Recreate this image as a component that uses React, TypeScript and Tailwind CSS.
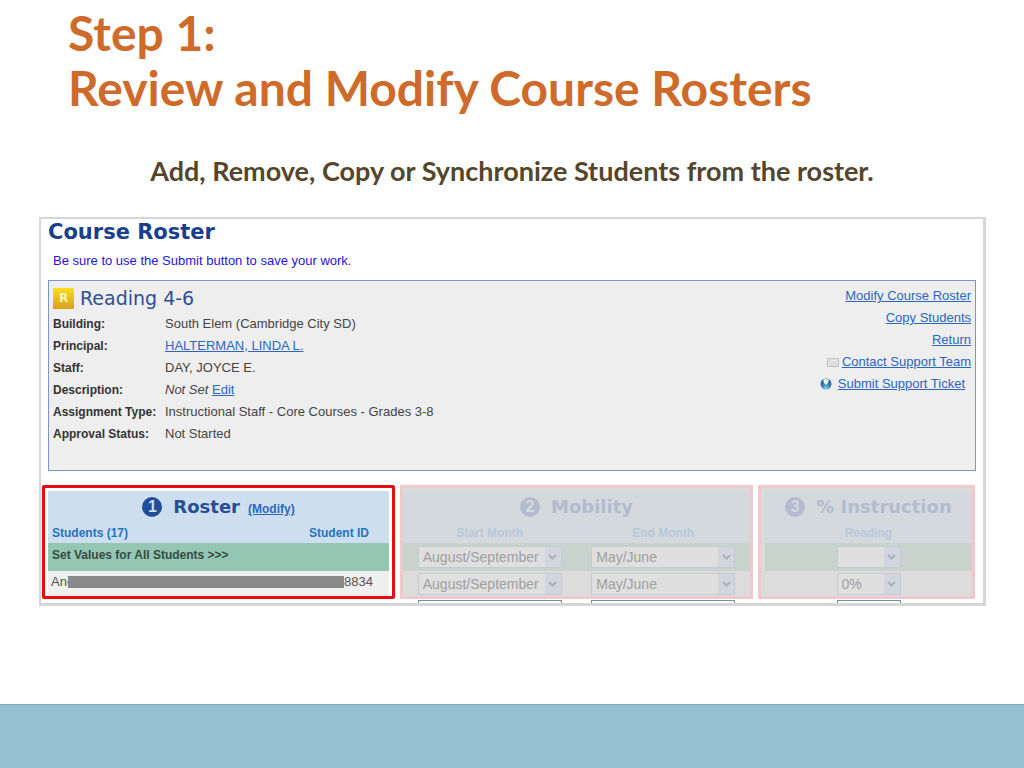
import type { ReactNode } from 'react';
import { clsx } from 'clsx';

const details: { label: string; value: ReactNode }[] = [
  { label: 'Building:', value: 'South Elem (Cambridge City SD)' },
  { label: 'Principal:', value: <TextLink>HALTERMAN, LINDA L.</TextLink> },
  { label: 'Staff:', value: 'DAY, JOYCE E.' },
  {
    label: 'Description:',
    value: (
      <>
        <em>Not Set</em> <TextLink>Edit</TextLink>
      </>
    ),
  },
  { label: 'Assignment Type:', value: 'Instructional Staff - Core Courses - Grades 3-8' },
  { label: 'Approval Status:', value: 'Not Started' },
];

function TextLink({ children }: { children: ReactNode }) {
  return (
    <a href="#" className="text-[#2b66c4] underline">
      {children}
    </a>
  );
}

function MailIcon() {
  return (
    <svg viewBox="0 0 12 9" className="h-[9px] w-3" aria-hidden="true">
      <rect x="0.5" y="0.5" width="11" height="8" fill="#dcdcdc" stroke="#c4c4c4" />
      <path d="M1.5 7.5 L4.5 3.5 L10.5 1.5" fill="none" stroke="#f4f4f4" />
    </svg>
  );
}

function HelpIcon() {
  return (
    <svg viewBox="0 0 12 12" className="h-3 w-3" aria-hidden="true">
      <defs>
        <radialGradient id="ball" cx="0.5" cy="0.9" r="0.9">
          <stop offset="0" stopColor="#8fd0ee" />
          <stop offset="0.45" stopColor="#2f7fb5" />
          <stop offset="1" stopColor="#2b5c8c" />
        </radialGradient>
      </defs>
      <circle cx="6" cy="6" r="5.5" fill="url(#ball)" />
      <path d="M3.5 1.5 Q6 0.5 8.5 1.5 Q9 4.5 6 7 Q3 4.5 3.5 1.5 Z" fill="#eef7fc" />
    </svg>
  );
}

function StepHeading({ step, title, muted, children }: { step: number; title: string; muted?: boolean; children?: ReactNode }) {
  return (
    <div className="flex h-8 items-center justify-center">
      <span
        className={clsx(
          'flex h-5 w-5 items-center justify-center rounded-full font-["Liberation_Sans"] text-base leading-5 font-bold',
          muted ? 'bg-[#b3bccf] text-[#d4d9dd]' : 'bg-[#214d9b] text-[#cddfef]',
        )}
      >
        {step}
      </span>
      <h3
        className={clsx(
          'ml-[11px] font-["DejaVu_Sans"] text-lg font-bold whitespace-nowrap',
          muted ? 'text-[#b3bccf]' : 'text-[#2a4c96]',
        )}
      >
        {title}
      </h3>
      {children}
    </div>
  );
}

function Picker({ label, options, wide }: { label: string; options: string[]; wide?: boolean }) {
  return (
    <span className={clsx('relative mx-auto block h-[22px]', wide ? 'w-36' : 'w-16')}>
      <select
        aria-label={label}
        className='block h-full w-full appearance-none border border-[#c6cbd1] bg-[#dfdfdf] pl-1 font-["Liberation_Sans"] text-sm leading-5 text-[#a0a0a0]'
      >
        {options.map((option) => (
          <option key={option}>{option}</option>
        ))}
      </select>
      <span className="pointer-events-none absolute top-px right-px flex h-5 w-4 items-center justify-center bg-[#d0d5df]">
        <svg viewBox="0 0 9 6" className="h-[6px] w-[9px]" aria-hidden="true">
          <path d="M1 1 L4.5 4.5 L8 1" fill="none" stroke="#a9b1be" strokeWidth="2" />
        </svg>
      </span>
    </span>
  );
}

interface StepTableProps {
  step: number;
  title: string;
  columns: string[];
  rows: string[][];
  wide?: boolean;
}

// Inactive steps are greyed out; the following row is cut off by the frame.
function MutedStep({ step, title, columns, rows, wide }: StepTableProps) {
  return (
    <section>
      <div className={clsx('h-[114px] border-[3px] border-[#eec8cd] bg-[#dadcda] pt-[3px]', !wide && 'pl-1')}>
        <table className="w-full table-fixed border-collapse text-center">
          <thead className="bg-[#d3d9dd]">
            <tr>
              <th colSpan={columns.length} className="p-0">
                <StepHeading step={step} title={title} muted />
              </th>
            </tr>
            <tr className="h-5 leading-5 text-[#b7c8dc]">
              {columns.map((column) => (
                <th key={column} className="p-0">
                  {column}
                </th>
              ))}
            </tr>
          </thead>
          <tbody>
            {rows.map((row, i) => (
              <tr key={i} className={i === 0 ? 'h-7 bg-[#c8d3ce]' : 'h-[25px] bg-[#dcdcdc]'}>
                {row.map((value, col) => (
                  <td key={col} className="p-0">
                    <Picker label={columns[col]} options={[value]} wide={wide} />
                  </td>
                ))}
              </tr>
            ))}
          </tbody>
        </table>
      </div>
      <div className={clsx('mx-[3px] flex h-1 overflow-hidden pt-px', !wide && 'pl-1')}>
        {columns.map((column) => (
          <div key={column} className="flex-1">
            <div className={clsx('mx-auto h-[22px] border border-[#7090a8] bg-white', wide ? 'w-36' : 'w-16')} />
          </div>
        ))}
      </div>
    </section>
  );
}

function RosterStep() {
  return (
    <section>
      <div className="h-[114px] rounded-[2px] border-[3px] border-[#e80c12] bg-white px-[3px] pt-[3px]">
        <table className="w-full border-collapse">
          <thead className="bg-[#cddfef]">
            <tr>
              <th colSpan={2} className="p-0">
                <StepHeading step={1} title="Roster">
                  <a href="#" className="mt-1 ml-2 text-[#2b66c4] underline">
                    (Modify)
                  </a>
                </StepHeading>
              </th>
            </tr>
            <tr className="h-5 leading-5 text-[#2673c0]">
              <th className="p-0 pl-1 text-left">Students (17)</th>
              <th className="p-0 pr-5 text-right">Student ID</th>
            </tr>
          </thead>
          <tbody>
            <tr className="h-7 bg-[#95c5b3] text-[#344c44]">
              <th colSpan={2} className="p-0 pb-1 pl-1 text-left">
                Set Values for All Students &gt;&gt;&gt;
              </th>
            </tr>
            <tr className="h-[25px] bg-[#efefef] text-[13px] text-[#555]">
              <td colSpan={2} className="p-0 pr-4 pb-1 pl-[3px]">
                <div className="flex items-center">
                  <span className="w-[17px]">And</span>
                  <span className="relative h-3 flex-1 bg-[#8a8a8a]" />
                  <span>8834</span>
                </div>
              </td>
            </tr>
          </tbody>
        </table>
      </div>
    </section>
  );
}

function CourseInfo() {
  return (
    <div className="mx-[7px] flex h-[191px] justify-between border border-[#7e94c6] bg-[#eee] pt-[3px] pr-1 pl-1">
      <div>
        <div className="flex h-7 items-center gap-[6px]">
          <span className='flex h-[21px] w-[21px] items-center justify-center bg-linear-to-b from-[#fbdc1c] to-[#d8a01c] font-["DejaVu_Sans"] text-xs font-bold text-[#fbf3b0]'>
            R
          </span>
          <h2 className='font-["DejaVu_Sans"] text-[19px] text-[#2e4f96]'>Reading 4-6</h2>
        </div>
        <dl className="mt-px grid grid-cols-[112px_auto] leading-[22px] text-[#444]">
          {details.map(({ label, value }) => (
            <div key={label} className="contents">
              <dt className="font-bold whitespace-nowrap text-[#333]">{label}</dt>
              <dd className="text-[13px]">{value}</dd>
            </div>
          ))}
        </dl>
      </div>
      <ul className="mt-px text-right text-[13px] leading-[22px]">
        <li>
          <TextLink>Modify Course Roster</TextLink>
        </li>
        <li>
          <TextLink>Copy Students</TextLink>
        </li>
        <li>
          <TextLink>Return</TextLink>
        </li>
        <li className="flex items-center justify-end gap-[3px]">
          <MailIcon />
          <TextLink>Contact Support Team</TextLink>
        </li>
        <li className="flex items-center justify-end gap-[6px] pr-[6px]">
          <HelpIcon />
          <TextLink>Submit Support Ticket</TextLink>
        </li>
      </ul>
    </div>
  );
}

export default function App() {
  return (
    <div className="flex min-h-screen flex-col bg-white">
      <header className="pt-[5px] font-['Lato',sans-serif] font-bold">
        <h1 className="px-[68px] text-[48px] leading-[55px] text-[#cf6b2a]">
          Step 1:
          <br />
          Review and Modify Course Rosters
        </h1>
        <p className="mt-9 mb-[2px] text-center text-[27px] leading-10 text-[#54462c]">
          Add, Remove, Copy or Synchronize Students from the roster.
        </p>
      </header>

      <main className="mt-6 mr-[38px] ml-[39px] overflow-hidden border-2 border-r-[3px] border-b-[3px] border-[#d6d6d6] font-['Liberation_Sans',sans-serif] text-[12px]">
        <h2 className='pl-[7px] font-["DejaVu_Sans"] text-[21px] leading-[26px] font-bold text-[#173f8c]'>Course Roster</h2>
        <p className="mb-[9px] pt-[6px] pl-3 text-[13px] leading-5 text-[#2414e0]">
          Be sure to use the Submit button to save your work.
        </p>
        <CourseInfo />
        <div className="mt-[14px] mr-2 ml-px grid grid-cols-[353fr_353fr_217fr] gap-[5px]">
          <RosterStep />
          <MutedStep
            step={2}
            title="Mobility"
            columns={['Start Month', 'End Month']}
            rows={[
              ['August/September', 'May/June'],
              ['August/September', 'May/June'],
            ]}
            wide
          />
          <MutedStep step={3} title="% Instruction" columns={['Reading']} rows={[[''], ['0%']]} />
        </div>
      </main>

      <footer className="mt-auto h-16 border-t border-[#84aab9] bg-[#95c1d2]" />
    </div>
  );
}
